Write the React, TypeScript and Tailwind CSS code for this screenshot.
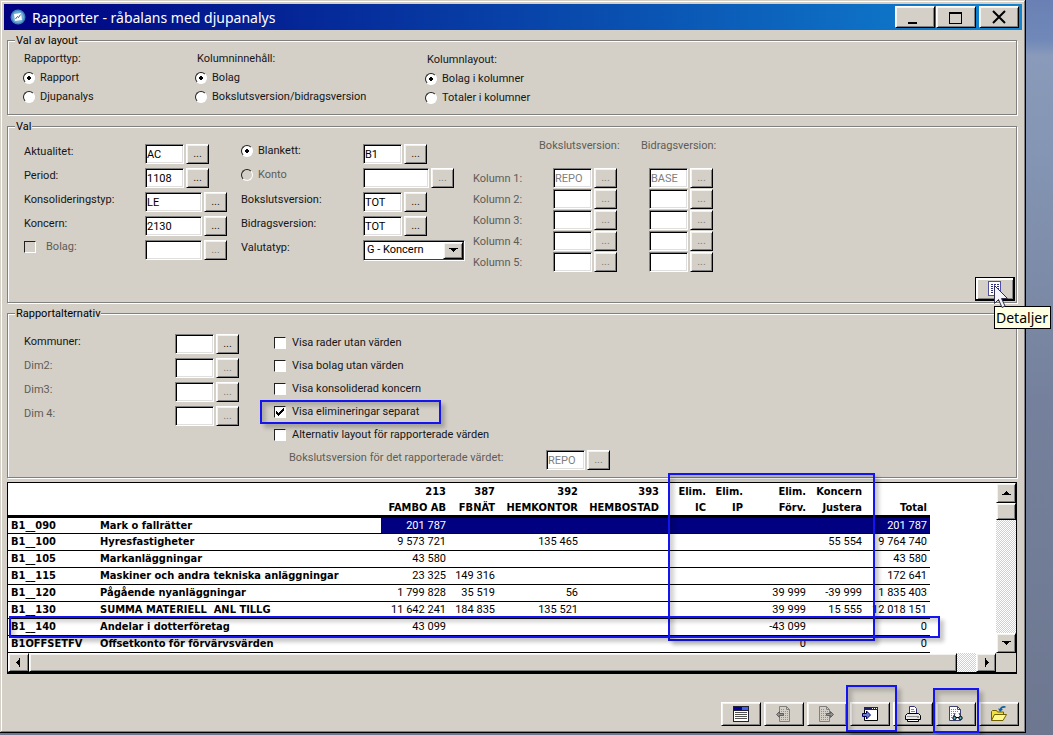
import React, { useId, useState } from "react";
import type { ReactNode } from "react";

const RAISED =
  "border border-t-white border-l-white border-b-black border-r-black bg-[#d4d0c8] shadow-[inset_1px_1px_0_#f4f2ee,inset_-1px_-1px_0_#808080]";

function Group({ title, className, children }: { title: string; className: string; children: ReactNode }) {
  return (
    <fieldset
      className={
        "min-w-0 border border-[#808080] shadow-[1px_1px_0_#fff,inset_1px_1px_0_#fff] " + className
      }
    >
      <legend className="ml-[7px] h-[14px] bg-[#d4d0c8] px-px pt-px leading-[14px] text-black">{title}</legend>
      {children}
    </fieldset>
  );
}

function Radio({ name, label, checked, disabled }: { name: string; label: string; checked?: boolean; disabled?: boolean }) {
  return (
    <label className={"flex items-center gap-[5px] leading-[14px] " + (disabled ? "text-[#5f5c56]" : "")}>
      <input
        type="radio"
        name={name}
        defaultChecked={checked}
        disabled={disabled}
        className="size-3 shrink-0 appearance-none rounded-full border border-t-[#202020] border-l-[#202020] border-b-white border-r-white bg-white checked:bg-[radial-gradient(circle,#000_0_2px,#fff_2px)] disabled:bg-[#d4d0c8]"
      />
      <span>{label}</span>
    </label>
  );
}

function Check({ label, checked, disabled }: { label: string; checked?: boolean; disabled?: boolean }) {
  return (
    <label className={"flex items-center leading-[14px] " + (disabled ? "gap-[10px] text-[#5f5c56]" : "gap-[6px]")}>
      <span className="relative size-3 shrink-0">
        <input
          type="checkbox"
          defaultChecked={checked}
          disabled={disabled}
          className="peer block size-3 appearance-none border border-t-[#202020] border-l-[#202020] border-b-white border-r-white bg-white disabled:bg-[#d4d0c8]"
        />
        <svg
          viewBox="0 0 12 12"
          className="pointer-events-none absolute inset-0 hidden size-3 peer-checked:block"
          shapeRendering="crispEdges"
        >
          <path d="M2 5h1v1h1v1h1v-1h1v-1h1v-1h1v-1h1v-1h1v3h-1v1h-1v1h-1v1h-1v1h-1v1h-1v-1h-1v-1h-1z" fill="#000" />
        </svg>
      </span>
      <span>{label}</span>
    </label>
  );
}

const WIDTHS = { s: "w-[39px]", m: "w-[57px]", l: "w-[66px]" };

function Lookup({
  id,
  label,
  value,
  size = "s",
  disabled,
}: {
  id?: string;
  label: string;
  value?: string;
  size?: "s" | "m" | "l";
  disabled?: boolean;
}) {
  return (
    <span className="flex gap-[2px]">
      <input
        id={id}
        aria-label={id ? undefined : label}
        defaultValue={value}
        disabled={disabled}
        className={
          "h-5 border border-t-[#808080] border-l-[#808080] border-b-white border-r-white bg-white pl-px text-[11px] text-black shadow-[inset_1px_1px_0_#000,inset_-1px_-1px_0_#dfdfdf] outline-none disabled:text-[#808080] " +
          WIDTHS[size]
        }
      />
      <button
        type="button"
        aria-label={"Välj " + label}
        disabled={disabled}
        className={"h-5 w-[23px] text-[11px] leading-[18px] text-[#222] disabled:text-[#808080] " + RAISED}
      >
        ...
      </button>
    </span>
  );
}

function Field({
  label,
  value,
  size,
  disabled,
  dimLabel,
  children,
}: {
  label: string;
  value?: string;
  size?: "s" | "m" | "l";
  disabled?: boolean;
  dimLabel?: boolean;
  children?: ReactNode;
}) {
  const id = useId();
  return (
    <>
      {children ?? (
        <label htmlFor={id} className={"pt-px leading-[14px] " + (dimLabel ? "text-[#5f5c56]" : "")}>
          {label}
        </label>
      )}
      <Lookup id={children ? undefined : id} label={label} value={value} size={size} disabled={disabled} />
    </>
  );
}

function Marker({ className }: { className: string }) {
  return (
    <span
      aria-hidden="true"
      className={
        "pointer-events-none absolute z-10 border-2 border-[#1414f0] shadow-[4px_4px_4px_rgba(0,0,0,0.22),inset_4px_4px_4px_rgba(0,0,0,0.18)] " +
        className
      }
    />
  );
}

function Arrow({ dir }: { dir: "up" | "down" | "left" | "right" }) {
  const d = {
    up: "M5 3h1v1h1v1h1v1h1v1h-7v-1h1v-1h1v-1h1z",
    down: "M2 3h7v1h-1v1h-1v1h-1v1h-1v-1h-1v-1h-1v-1h-1z",
    left: "M3 5h1v-1h1v-1h1v-1h1v7h-1v-1h-1v-1h-1v-1h-1z",
    right: "M4 2h1v1h1v1h1v1h1v1h-1v1h-1v1h-1v1h-1z",
  }[dir];
  return (
    <svg viewBox="0 0 11 11" className="size-[13px]" shapeRendering="crispEdges">
      <path d={d} />
    </svg>
  );
}

function ScrollButton({ dir, className }: { dir: "up" | "down" | "left" | "right"; className: string }) {
  const names = { up: "Upp", down: "Ner", left: "Vänster", right: "Höger" };
  return (
    <button type="button" aria-label={names[dir]} className={"flex shrink-0 items-center justify-center " + RAISED + " " + className}>
      <Arrow dir={dir} />
    </button>
  );
}

const HEAD = [
  ["213", "FAMBO AB"],
  ["387", "FBNÄT"],
  ["392", "HEMKONTOR"],
  ["393", "HEMBOSTAD"],
  ["Elim.", "IC"],
  ["Elim.", "IP"],
  ["Elim.", "Förv."],
  ["Koncern", "Justera"],
  ["", "Total"],
];

const ROWS: [string, string, string[]][] = [
  ["B1__090", "Mark o fallrätter", ["201 787", "", "", "", "", "", "", "", "201 787"]],
  ["B1__100", "Hyresfastigheter", ["9 573 721", "", "135 465", "", "", "", "", "55 554", "9 764 740"]],
  ["B1__105", "Markanläggningar", ["43 580", "", "", "", "", "", "", "", "43 580"]],
  ["B1__115", "Maskiner och andra tekniska anläggningar", ["23 325", "149 316", "", "", "", "", "", "", "172 641"]],
  ["B1__120", "Pågående nyanläggningar", ["1 799 828", "35 519", "56", "", "", "", "39 999", "-39 999", "1 835 403"]],
  ["B1__130", "SUMMA MATERIELL  ANL TILLG", ["11 642 241", "184 835", "135 521", "", "", "", "39 999", "15 555", "12 018 151"]],
  ["B1__140", "Andelar i dotterföretag", ["43 099", "", "", "", "", "", "-43 099", "", "0"]],
  ["B1OFFSETFV", "Offsetkonto för förvärvsvärden", ["", "", "", "", "", "", "0", "", "0"]],
];

function ReportTable() {
  const [selected, setSelected] = useState(0);
  return (
    <table className="w-[922px] table-fixed border-collapse text-[11px] leading-[15px] text-black">
      <colgroup>
        <col className="w-[92px]" />
        <col className="w-[281px]" />
        <col className="w-[68px]" />
        <col className="w-[49px]" />
        <col className="w-[83px]" />
        <col className="w-[81px]" />
        <col className="w-[47px]" />
        <col className="w-[37px]" />
        <col className="w-[63px]" />
        <col className="w-[56px]" />
        <col className="w-[65px]" />
      </colgroup>
      <thead className="font-['DejaVu_Sans_Condensed','DejaVu_Sans',sans-serif] leading-[14px]">
        {[0, 1].map((line) => (
          <tr key={line} className={line ? "h-[17px] border-b-[3px] border-black" : "h-4"}>
            <th className="p-0" />
            <th className="p-0" />
            {HEAD.map((h, i) => (
              <th key={i} className="p-0 pr-[3px] text-right align-bottom font-bold whitespace-nowrap">
                {h[line]}
              </th>
            ))}
          </tr>
        ))}
      </thead>
      <tbody>
        {ROWS.map(([code, name, cells], r) => (
          <tr key={code} onClick={() => setSelected(r)} className="h-[17px] border-b border-black">
            <th className="p-0 pl-[3px] text-left font-['DejaVu_Sans_Condensed','DejaVu_Sans',sans-serif] font-bold">{code}</th>
            <th className="p-0 text-left font-['DejaVu_Sans_Condensed','DejaVu_Sans',sans-serif] font-bold whitespace-pre">
              {name}
            </th>
            {cells.map((c, i) => (
              <td
                key={i}
                className={"p-0 pr-[3px] text-right whitespace-nowrap " + (selected === r ? "bg-[#000080] text-white" : "")}
              >
                {c}
              </td>
            ))}
          </tr>
        ))}
      </tbody>
    </table>
  );
}

function Page({ gray }: { gray?: boolean }) {
  return (
    <>
      <path d="M3.5 0.5h7l3 3v12h-10z" fill={gray ? "#d4d0c8" : "#fff"} stroke={gray ? "#808080" : "#404080"} />
      <path d="M10.500 .5v3h3" fill="none" stroke={gray ? "#808080" : "#404080"} />
      <path
        d="M5 3.500h4M5 5.500h7M5 7.500h7M5 9.500h7M5 11.500h7M5 13.500h7"
        stroke={gray ? "#909090" : "#8080b0"}
        strokeDasharray="1 1"
      />
    </>
  );
}

const ICONS: Record<string, ReactNode> = {
  list: (
    <>
      <path d="M0 0h16v16H0z" fill="#202030" />
      <path d="M1 1h8v3H1z" fill="#0000a0" />
      <path d="M9 1h6v3H9z" fill="#4060f0" />
      <path d="M1 5h14v10H1z" fill="#fff" />
      <path d="M2 6.500h12M2 8.500h12M2 10.500h12M2 12.500h12" stroke="#505050" />
    </>
  ),
  prev: (
    <>
      <Page gray />
      <path d="M.5 8.500l3-3v2h4v2h-4v2z" fill="#909090" stroke="#606060" />
    </>
  ),
  next: (
    <>
      <g transform="translate(-3 0)">
        <Page gray />
      </g>
      <path d="M14.500 8.500l-3-3v2h-4v2h4v2z" fill="#909090" stroke="#606060" />
    </>
  ),
  open: (
    <>
      <path d="M2.500 1.500h13v13h-13z" fill="#fff" stroke="#000" />
      <path d="M2 1h14v3H2z" fill="#202060" />
      <path d="M10 2h1v1h-1zM12 2h1v1h-1zM14 2h1v1h-1z" fill="#fff" />
      <path d="M.5 7.500h4v-2.500l4 4-4 4v-2.500h-4z" fill="#7080d0" stroke="#000060" />
    </>
  ),
  print: (
    <>
      <path d="M4.500 7.500v-7h5l2 2v5z" fill="#fff" stroke="#303070" />
      <path d="M6 3.500h3M6 5.500h4" stroke="#8080b0" />
      <path d="M2.500 7.500h11l2 2v4h-15v-4z" fill="#e8e8e8" stroke="#000" />
      <path d="M2.500 13.500h11v2h-11z" fill="#fff" stroke="#000" />
      <path d="M2 10.500h12" stroke="#909090" />
      <path d="M12 11h2v1h-2z" fill="#d0a000" />
    </>
  ),
  search: (
    <>
      <path d="M1.500 .5h8l3 3v11h-11z" fill="#fff" stroke="#404070" />
      <path d="M9.500 .5v3h3" fill="none" stroke="#404070" />
      <path d="M3 3.500h5M3 5.500h7M3 7.500h4M3 9.500h3M3 11.500h3" stroke="#8080b0" strokeDasharray="1 1" />
      <path d="M7 7l-1 4M11 7l2 4" stroke="#303050" />
      <circle cx="6.500" cy="12" r="1.700" fill="#60b0c0" stroke="#000" />
      <circle cx="12.500" cy="12" r="1.700" fill="#60b0c0" stroke="#000" />
      <path d="M8 11.500h3" stroke="#000" />
    </>
  ),
  exit: (
    <>
      <path d="M.5 14.500v-9l1-1h4l1 1.500h6v3" fill="#f0e040" stroke="#706000" />
      <path d="M.5 14.500l3-6h12l-3.500 6z" fill="#fff88c" stroke="#706000" />
      <path d="M14.500 1c-3-.5-4.500 .5-5 2.500" fill="none" stroke="#1060a0" strokeWidth="1.500" />
      <path d="M7 2.500l5 .8-3 2.700z" fill="#1060a0" />
    </>
  ),
};

function ToolButton({ icon, label, disabled, children }: { icon: string; label: string; disabled?: boolean; children?: ReactNode }) {
  return (
    <span className="relative">
      <button type="button" aria-label={label} disabled={disabled} className={"flex h-6 w-10 items-center justify-center " + RAISED}>
        <svg viewBox="0 0 16 16" className="size-4">
          {ICONS[icon]}
        </svg>
      </button>
      {children}
    </span>
  );
}

function TitleButton({ label, children }: { label: string; children: ReactNode }) {
  return (
    <button type="button" aria-label={label} className={"h-[22px] w-10 " + RAISED}>
      <svg viewBox="0 0 38 20" className="h-5 w-[38px]">
        {children}
      </svg>
    </button>
  );
}

export default function App() {
  const currencyId = useId();
  return (
    <div className="min-h-screen bg-[linear-gradient(#6a80b4_0,#7089b8_40px,#8a9aba_56px,#8496b4_150px,#75819c_400px,#6d7790_735px)] pr-[27px] pb-[3px] font-[Roboto,sans-serif] text-[11px] text-[#161616]">
      <main className="border-r border-b border-black bg-[#d4d0c8] p-1 pr-[3px] pb-[6px] shadow-[inset_1px_1px_0_#d4d0c8,inset_-1px_-1px_0_#808080,inset_2px_2px_0_#fff]">
        <header className="flex h-[26px] items-center bg-[linear-gradient(to_right,#000080,#1084d0)] pr-[3px] pl-[6px]">
          <svg viewBox="0 0 16 16" className="size-4">
            <circle cx="8" cy="8" r="7.500" fill="#3f83bd" />
            <circle cx="8" cy="8" r="6" fill="#6fabd6" />
            <path d="M4 5l7-1 1 7-7 1z" fill="#fff" />
            <path d="M5.500 10l2-2.500 1 1 2-3" fill="none" stroke="#2a5f92" />
          </svg>
          <h1 className="ml-[6px] grow pt-px font-['Noto_Sans',sans-serif] text-[14px] leading-5 whitespace-nowrap text-white">
            Rapporter - råbalans med djupanalys
          </h1>
          <div className="flex gap-px">
            <TitleButton label="Minimera">
              <path d="M12 15h9v2h-9z" />
            </TitleButton>
            <TitleButton label="Maximera">
              <path d="M12 5h13v12H12zM13 7v9h11V7z" fillRule="evenodd" />
            </TitleButton>
            <span className="w-px" />
            <TitleButton label="Stäng">
              <path d="M13 4l12 12M25 4l-12 12" stroke="#000" strokeWidth="2" />
            </TitleButton>
          </div>
        </header>

        <div className="px-[3px] pr-[5px]">
          <Group title="Val av layout" className="mt-[3px] pb-[6px]">
            <div className="grid grid-cols-[172px_230px_1fr] pt-[4px] pl-[15px]">
              <div role="radiogroup" aria-label="Rapporttyp" className="grid grid-rows-[17px_19px_20px] items-center">
                <span className="pl-px">Rapporttyp:</span>
                <Radio name="typ" label="Rapport" checked />
                <Radio name="typ" label="Djupanalys" />
              </div>
              <div role="radiogroup" aria-label="Kolumninnehåll" className="grid grid-rows-[17px_19px_20px] items-center">
                <span className="pl-[2px]">Kolumninnehåll:</span>
                <Radio name="innehall" label="Bolag" checked />
                <Radio name="innehall" label="Bokslutsversion/bidragsversion" />
              </div>
              <div role="radiogroup" aria-label="Kolumnlayout" className="grid grid-rows-[17px_19px_20px] items-center pt-px">
                <span className="pl-[2px]">Kolumnlayout:</span>
                <Radio name="kollayout" label="Bolag i kolumner" checked />
                <Radio name="kollayout" label="Totaler i kolumner" />
              </div>
            </div>
          </Group>

          <Group title="Val" className="mt-[4px]">
            <div className="flex h-[169px] pl-[16px]">
              <div className="grid w-[217px] shrink-0 auto-rows-[24px] grid-cols-[121px_1fr] items-start pt-[11px]">
                <Field label="Aktualitet:" value="AC" />
                <Field label="Period:" value="1108" />
                <Field label="Konsolideringstyp:" value="LE" size="m" />
                <Field label="Koncern:" value="2130" size="m" />
                <Field label="Bolag:" size="m" disabled>
                  <Check label="Bolag:" disabled />
                </Field>
              </div>
              <div className="grid w-[232px] shrink-0 auto-rows-[24px] grid-cols-[122px_1fr] items-start pt-[11px]">
                <Field label="Blankett:" value="B1">
                  <Radio name="blankett" label="Blankett:" checked />
                </Field>
                <Field label="Konto" size="l" disabled>
                  <Radio name="blankett" label="Konto" disabled />
                </Field>
                <Field label="Bokslutsversion:" value="TOT" />
                <Field label="Bidragsversion:" value="TOT" />
                <label htmlFor={currencyId} className="pt-px leading-[14px]">
                  Valutatyp:
                </label>
                <span className="relative h-[21px] w-[102px]">
                  <select
                    id={currencyId}
                    className="h-[21px] w-full appearance-none border border-t-[#808080] border-l-[#808080] border-b-white border-r-white bg-white pl-[3px] text-black shadow-[inset_1px_1px_0_#000,inset_-1px_-1px_0_#404040] outline-none"
                  >
                    <option>G - Koncern</option>
                  </select>
                  <span
                    className={"pointer-events-none absolute top-[2px] right-[2px] flex h-[17px] w-5 items-center justify-center " + RAISED}
                  >
                    <Arrow dir="down" />
                  </span>
                </span>
              </div>
              <div className="pt-[5px] text-[#5f5c56]">
                <div className="flex h-[30px] gap-[21px] pt-px pl-[66px] leading-[14px]">
                  <span className="w-[81px] whitespace-nowrap">Bokslutsversion:</span>
                  <span className="whitespace-nowrap">Bidragsversion:</span>
                </div>
                {[1, 2, 3, 4, 5].map((n) => (
                  <div key={n} className="flex h-[21px] items-start">
                    <span className="w-[80px] leading-[21px]">Kolumn {n}:</span>
                    <span className="w-[96px]">
                      <Lookup label={"bokslutsversion " + n} value={n === 1 ? "REPO" : ""} disabled />
                    </span>
                    <Lookup label={"bidragsversion " + n} value={n === 1 ? "BASE" : ""} disabled />
                  </div>
                ))}
              </div>
              <div className="relative mr-px mb-px ml-auto self-end">
                <button
                  type="button"
                  aria-describedby="detaljer-tip"
                  aria-label="Detaljer"
                  className="flex h-6 w-10 items-center justify-center border border-r-2 border-b-2 border-black bg-[#d4d0c8] shadow-[inset_2px_2px_0_#fff,inset_-1px_-1px_0_#808080]"
                >
                  <svg viewBox="0 0 14 16" className="h-4 w-[14px]" shapeRendering="crispEdges">
                    <path d="M.5 .5h12v14h-12z" fill="#fff" stroke="#5050a0" />
                    <path d="M3 3.500h8M3 5.500h8M3 7.500h8M3 9.500h8M3 11.500h8" stroke="#303080" strokeDasharray="2 1" />
                  </svg>
                </button>
                <svg viewBox="0 0 15 24" className="pointer-events-none absolute top-2 left-[19px] z-20 h-6 w-[15px]">
                  <path d="M.5 .5v18l4-4 3.500 8 3-1.500-3.500-7.500h6z" fill="#f4f4fa" stroke="#303048" />
                </svg>
                <span
                  id="detaljer-tip"
                  role="tooltip"
                  className="absolute top-[29px] left-[19px] z-10 h-[23px] border border-black bg-[#ffffe1] px-px pr-[2px] font-['Noto_Sans',sans-serif] text-[14px] leading-[21px] text-black"
                >
                  Detaljer
                </span>
              </div>
            </div>
          </Group>

          <Group title="Rapportalternativ" className="mt-[3px]">
            <div className="flex h-[157px] pl-[16px]">
              <div className="grid w-[250px] shrink-0 auto-rows-[24px] grid-cols-[151px_1fr] items-start pt-[14px]">
                <Field label="Kommuner:" />
                <Field label="Dim2:" disabled dimLabel />
                <Field label="Dim3:" disabled dimLabel />
                <Field label="Dim 4:" disabled dimLabel />
              </div>
              <div className="pt-[11px]">
                <div className="grid auto-rows-[23px] items-center">
                  <Check label="Visa rader utan värden" />
                  <Check label="Visa bolag utan värden" />
                  <Check label="Visa konsoliderad koncern" />
                  <div className="relative">
                    <Check label="Visa elimineringar separat" checked />
                    <Marker className="-top-[5px] -left-[14px] h-6 w-[181px]" />
                  </div>
                  <Check label="Alternativ layout för rapporterade värden" />
                </div>
                <div className="grid grid-cols-[257px_1fr] pt-[4px] pl-[15px]">
                  <Field label="Bokslutsversion för det rapporterade värdet:" value="REPO" disabled dimLabel />
                </div>
              </div>
            </div>
          </Group>

          <section className="relative mt-[4px] border border-b-2 border-black bg-white">
            <div className="flex">
              <div className="h-[170px] min-w-0 grow overflow-hidden">
                <ReportTable />
              </div>
              <div className="flex w-5 shrink-0 flex-col bg-[conic-gradient(#fff_25%,#d4d0c8_0_50%,#fff_0_75%,#d4d0c8_0)] bg-[length:2px_2px]">
                <ScrollButton dir="up" className="h-5 w-5" />
                <span className={"h-[17px] " + RAISED} />
                <ScrollButton dir="down" className="mt-auto h-5 w-5" />
              </div>
            </div>
            <div className="flex h-[19px] bg-[conic-gradient(#fff_25%,#d4d0c8_0_50%,#fff_0_75%,#d4d0c8_0)] bg-[length:2px_2px]">
              <ScrollButton dir="left" className="w-[21px]" />
              <span className={"grow " + RAISED} />
              <span className="w-[19px] shrink-0" />
              <ScrollButton dir="right" className="w-5" />
              <span className="w-5 shrink-0 bg-[#d4d0c8]" />
            </div>
            <Marker className="-top-[10px] left-[660px] h-[168px] w-[207px]" />
            <Marker className="top-[133px] left-[1px] h-[22px] w-[931px]" />
          </section>
        </div>

        <div role="toolbar" className="mt-[28px] flex justify-end gap-[3px] pr-[3px]">
          <ToolButton icon="list" label="Lista" />
          <ToolButton icon="prev" label="Föregående" disabled />
          <ToolButton icon="next" label="Nästa" disabled />
          <ToolButton icon="open" label="Kör rapport">
            <Marker className="-top-[17px] -left-[4px] h-[47px] w-[51px]" />
          </ToolButton>
          <ToolButton icon="print" label="Skriv ut" />
          <ToolButton icon="search" label="Djupanalys">
            <Marker className="-top-[14px] -left-[3px] h-[45px] w-[46px]" />
          </ToolButton>
          <ToolButton icon="exit" label="Avsluta" />
        </div>
      </main>
    </div>
  );
}
